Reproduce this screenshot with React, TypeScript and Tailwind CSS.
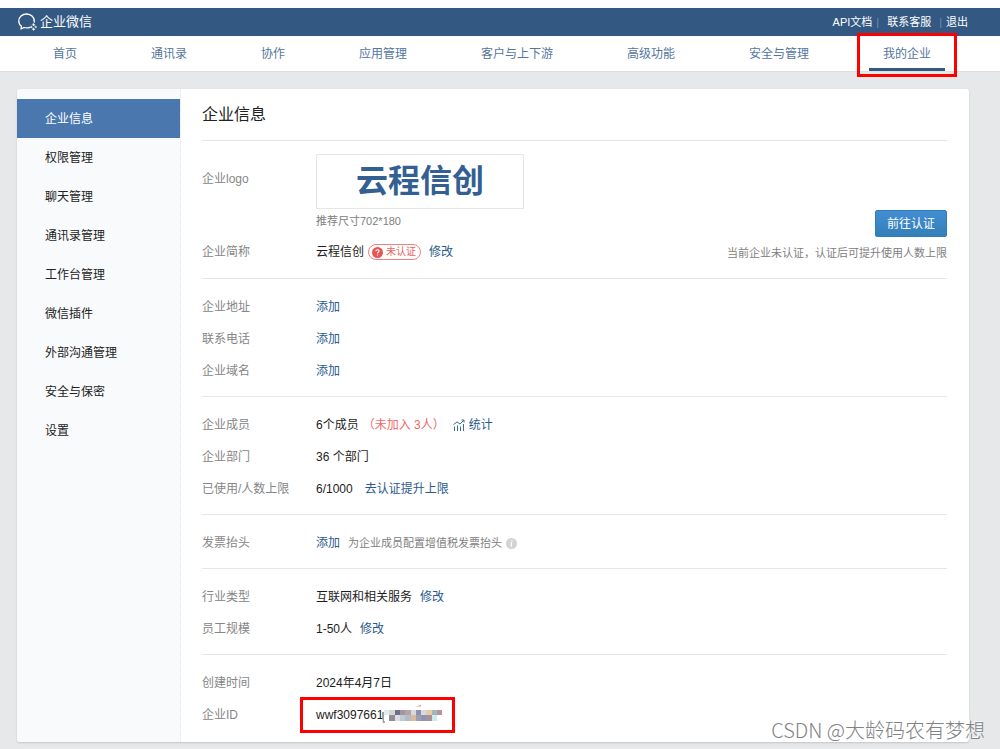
import type { ReactNode } from "react";

const navItems = ["首页", "通讯录", "协作", "应用管理", "客户与上下游", "高级功能", "安全与管理", "我的企业"];

const sideItems = [
  "企业信息",
  "权限管理",
  "聊天管理",
  "通讯录管理",
  "工作台管理",
  "微信插件",
  "外部沟通管理",
  "安全与保密",
  "设置",
];

const mosaicTop = ["#dcedf5", "#d9d8c6", "#6d6f92", "#a3979d", "#b3a5a5", "#d5d8e6", "#8f90ac", "#d8d9e4", "#e6cda8", "#9fb7bf", "#b9919f"];
const mosaicBottom = ["#ffffff", "#8f8c94", "#dfdce6", "#bfcbd2", "#b0bcc8", "#dcb99b", "#9c9db2", "#8f93ae", "#a5929c", "#cdecf0", "#ffffff"];

function LogoMark() {
  return (
    <svg className="size-5" viewBox="0 0 20 20" fill="none" stroke="#fff" strokeLinecap="round" strokeLinejoin="round" aria-hidden="true">
      <path
        d="M17.300 10C17.600 5.500 14.200 2 9.600 2 5.200 2 1.800 5 1.800 8.900c0 2.300 1 4.100 2.700 5.300L4 17l3-1.500c2 .6 4 .6 6-.1"
        strokeWidth="1.300"
      />
      <path d="M16.600 11.600l1.100 1.200-1.100 1.200-1.100-1.200zM16.600 16l1.100 1.200-1.100 1.200-1.100-1.200z" fill="#fff" strokeWidth="0.500" />
      <path d="M14.300 13.900l1.100 1.100-1.100 1.100-1.100-1.100zM18.800 13.900l1 1.100-1 1.100-1-1.100z" fill="#fff" strokeWidth="0.300" />
    </svg>
  );
}

function ChartIcon() {
  return (
    <svg className="size-3" viewBox="0 0 12 12" fill="none" stroke="#3f6c96" strokeWidth="1" aria-hidden="true">
      <path d="M1.500 12V7.500M4.500 12V6.500M7.500 12V7.500M10.500 12V5" />
      <path d="M.5 5.500l3.500-2.500 3 2 4-4M8.500 1H11v2.500" />
    </svg>
  );
}

function Mosaic() {
  return (
    <svg className="-ml-px h-5 w-[61px]" viewBox="0 0 61 20" aria-hidden="true">
      <path d="M0 7h3l-1 5 1 6H1L0 12z" fill="#93a896" />
      <g shapeRendering="crispEdges">
        {mosaicTop.map((c, i) => (
          <rect key={`t${i}`} x={2 + i * 5.3} y="5" width="5.300" height="5" fill={c} />
        ))}
        {mosaicBottom.map((c, i) => (
          <rect key={`b${i}`} x={2 + i * 5.3} y="10" width="5.300" height="6" fill={c} />
        ))}
      </g>
      <path d="M34 1.500L39 0v1.500z" fill="#f08a8a" />
    </svg>
  );
}

function A({ children }: { children: ReactNode }) {
  return (
    <a href="#" className="text-[#2a5a8c]">
      {children}
    </a>
  );
}

function Row({ label, children }: { label: string; children: ReactNode }) {
  return (
    <div className="flex h-8 items-center">
      <dt className="w-[114px] shrink-0 text-[#868686]">{label}</dt>
      <dd className="flex items-center whitespace-pre">{children}</dd>
    </div>
  );
}

function Section({ children, last = false }: { children: ReactNode; last?: boolean }) {
  return <dl className={last ? "pt-3 pb-[9px]" : "border-b border-[#e6e7e9] pt-3 pb-[9px]"}>{children}</dl>;
}

export default function App() {
  return (
    <div className="relative flex min-h-screen flex-col overflow-hidden bg-[#e7e8ea] font-['Liberation_Sans','Noto_Sans_CJK_SC',sans-serif] text-xs text-[#1c1c1c]">
      <div className="h-2 bg-white" />
      <header className="flex h-7 items-center justify-between bg-[#335882] pr-8 pl-[17px] text-white">
        <a href="#" className="flex items-center gap-[3px] text-[13px] leading-5">
          <LogoMark />
          企业微信
        </a>
        <div className="flex items-center text-[11px]">
          <a href="#">API文档</a>
          <span className="mr-2 ml-1 text-[#6f8fb3]">|</span>
          <a href="#">联系客服</a>
          <span className="mr-1 ml-2 text-[#6f8fb3]">|</span>
          <a href="#">退出</a>
        </div>
      </header>

      <nav className="flex h-9 items-stretch justify-between border-b border-[#dddfe1] bg-white pr-[69px] pl-[53px] text-[#54759d]">
        {navItems.map((item, i) => {
          const active = i === navItems.length - 1;
          return (
            <a key={item} href="#" className="relative flex items-center" aria-current={active ? "page" : undefined}>
              {item}
              {active && (
                <>
                  <span className="absolute -inset-x-3.5 bottom-0 h-[3px] bg-[#335882]" />
                  <span className="absolute -inset-x-[26px] -top-[3px] -bottom-1.5 z-10 border-[3px] border-[#fe0000]" />
                </>
              )}
            </a>
          );
        })}
      </nav>

      <div className="mt-[17px] mr-[31px] mb-[7px] ml-[17px] flex grow rounded-[3px] bg-white shadow-[0_1px_2px_rgba(0,0,0,0.15)]">
        <aside className="w-[164px] shrink-0 rounded-l-[3px] border-r border-dotted border-[#e1e5ea] bg-[#f8fafc] pt-2.5">
          {sideItems.map((item, i) => (
            <a
              key={item}
              href="#"
              className={
                i === 0
                  ? "flex h-[39px] items-center bg-[#4a78ae] pl-7 text-white"
                  : "flex h-[39px] items-center pl-7 text-[#222]"
              }
            >
              {item}
            </a>
          ))}
        </aside>

        <main className="grow pr-[22px] pl-[21px]">
          <h1 className="flex h-[52px] items-center border-b border-[#e0e4e9] text-base text-[#222]">企业信息</h1>

          <div className="flex items-end justify-between border-b border-[#e6e7e9] pt-[13px] pb-2.5">
            <dl>
              <div className="flex">
                <dt className="w-[114px] shrink-0 pt-[9px] leading-8 text-[#868686]">企业logo</dt>
                <dd>
                  <div className="flex h-[55px] w-[208px] items-center justify-center border border-[#e4e6e9] text-[32px] font-bold text-[#335f92]">
                    云程信创
                  </div>
                  <p className="mt-1 mb-[7px] text-[11px] leading-4 text-[#808080]">推荐尺寸702*180</p>
                </dd>
              </div>
              <Row label="企业简称">
                云程信创
                <span className="mr-2 ml-1 flex h-4 items-center gap-[3px] rounded-full border border-[#f08080] pr-1 pl-[3px] text-[10px] text-[#ee5f5f]">
                  <svg className="size-[11px]" viewBox="0 0 11 11" fill="none" aria-hidden="true">
                    <circle cx="5.500" cy="5.500" r="5.500" fill="#e85555" />
                    <path d="M3.900 4.300c0-1 .7-1.600 1.600-1.600s1.600.6 1.600 1.400c0 1.100-1.600 1.200-1.600 2.400M5.500 7.600v1" stroke="#fff" strokeWidth="1.100" />
                  </svg>
                  未认证
                </span>
                <A>修改</A>
              </Row>
            </dl>
            <div className="flex flex-col items-end gap-2 pb-[7px]">
              <button type="button" className="h-[27px] rounded-xs border border-[#2e7dbb] bg-linear-to-b from-[#438dd3] to-[#337fb7] px-[11px] text-white">
                前往认证
              </button>
              <p className="text-[11px] leading-4 text-[#808080]">当前企业未认证，认证后可提升使用人数上限</p>
            </div>
          </div>

          <Section>
            <Row label="企业地址"><A>添加</A></Row>
            <Row label="联系电话"><A>添加</A></Row>
            <Row label="企业域名"><A>添加</A></Row>
          </Section>

          <Section>
            <Row label="企业成员">
              6个成员
              <span className="mr-2 ml-1 text-[#f0696a]">（未加入 3人）</span>
              <a href="#" className="flex items-center gap-1 text-[#2a5a8c]">
                <ChartIcon />
                统计
              </a>
            </Row>
            <Row label="企业部门">36 个部门</Row>
            <Row label="已使用/人数上限">
              <span className="mr-3">6/1000</span>
              <A>去认证提升上限</A>
            </Row>
          </Section>

          <Section>
            <Row label="发票抬头">
              <A>添加</A>
              <span className="mr-1 ml-2 text-[11px] text-[#808080]">为企业成员配置增值税发票抬头</span>
              <svg className="size-[11px]" viewBox="0 0 11 11" fill="none" aria-hidden="true">
                <circle cx="5.500" cy="5.500" r="5.500" fill="#d3d3d3" />
                <path d="M6 2.300v1.100M4.600 4.700h1L5.100 8h1" stroke="#fff" strokeWidth="1.100" />
              </svg>
            </Row>
          </Section>

          <Section>
            <Row label="行业类型">
              <span className="mr-2">互联网和相关服务</span>
              <A>修改</A>
            </Row>
            <Row label="员工规模">
              <span className="mr-2">1-50人</span>
              <A>修改</A>
            </Row>
          </Section>

          <Section last>
            <Row label="创建时间">2024年4月7日</Row>
            <Row label="企业ID">
              <span className="relative flex items-center">
                wwf3097661
                <Mosaic />
                <span className="absolute -inset-y-2 -right-3 -left-4 border-[3px] border-[#fe0000]" />
              </span>
            </Row>
          </Section>
        </main>
      </div>

      <div className="absolute right-[15px] bottom-[5px] font-['Noto_Sans_CJK_SC',sans-serif] text-xl font-light text-[#808284] [text-shadow:-1px_-1px_0_rgba(255,255,255,0.8)]">
        CSDN @大龄码农有梦想
      </div>
    </div>
  );
}
